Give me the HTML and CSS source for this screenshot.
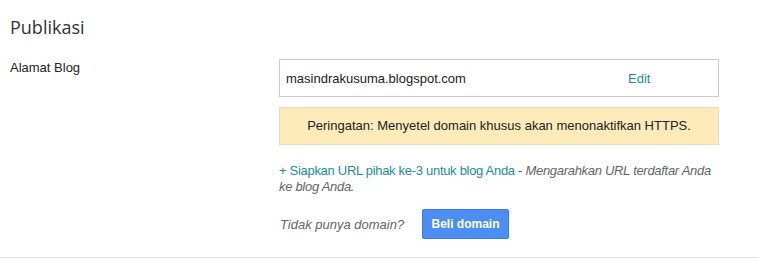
FILE: index.html
```html
<!DOCTYPE html>
<html lang="id">
<head>
    <meta charset="UTF-8">
    <title>Publikasi</title>
    <link rel="stylesheet" href="styles.css">
</head>
<body>

<section class="panel">
    <h2 class="panel-title">Publikasi</h2>

    <div class="setting-row">
        <div class="setting-label">Alamat Blog</div>
        <div class="setting-body">
            <div class="address-box">
                <span class="address">masindrakusuma.blogspot.com</span>
                <a class="edit-link" href="#">Edit</a>
            </div>

            <div class="warning">Peringatan: Menyetel domain khusus akan menonaktifkan HTTPS.</div>

            <p class="custom-url">
                <a href="#">+ Siapkan URL pihak ke-3 untuk blog Anda</a> -
                <em>Mengarahkan URL terdaftar Anda ke blog Anda.</em>
            </p>

            <div class="buy-row">
                <em>Tidak punya domain?</em>
                <button class="buy-btn">Beli domain</button>
            </div>
        </div>
    </div>
</section>

</body>
</html>
```

FILE: styles.css
```css
/* General */
body {
    margin: 0;
    padding: 0;
    background: #fff;
    font-family: Arial, "Liberation Sans", sans-serif;
    font-size: 13px;
    color: #222;
}

.panel {
    padding: 14px 10px 0 10px;
    border-bottom: 1px solid #ebebeb;
    height: 243px;
}

.panel-title {
    margin: 0;
    font-family: "Open Sans", sans-serif;
    font-weight: normal;
    font-size: 18px;
    color: #333;
    line-height: 26px;
}

/* Row */
.setting-row {
    display: flex;
    margin-top: 18px;
}

.setting-label {
    width: 269px;
    padding-top: 2px;
    line-height: 16px;
}

.setting-body {
    width: 440px;
}

.address-box {
    display: flex;
    height: 36px;
    align-items: center;
    border: 1px solid #ccc;
    padding: 0 6px;
    margin-top: 1px;
}

.address {
    width: 342px;
}

.edit-link {
    color: #1e8c9c;
    text-decoration: none;
}

.warning {
    margin-top: 10px;
    height: 36px;
    line-height: 36px;
    background: #fcebb9;
    border: 1px solid #e3dcc6;
    text-align: center;
}

.custom-url {
    margin: 18px -4px 0 0;
    line-height: 16px;
    color: #555;
    letter-spacing: -0.3px;
}

.custom-url a {
    color: #1e8c9c;
    text-decoration: none;
}

.custom-url em {
    color: #666;
}

.buy-row {
    display: flex;
    align-items: center;
    margin-top: 14px;
    color: #666;
}

.buy-row em {
    width: 142px;
    padding-left: 1px;
}

.buy-btn {
    width: 87px;
    height: 30px;
    border: 1px solid #3c7ae4;
    border-radius: 2px;
    background: #4d8ef5;
    color: #fff;
    font-family: Arial, "Liberation Sans", sans-serif;
    font-weight: bold;
    font-size: 12px;
    cursor: pointer;
}
```
